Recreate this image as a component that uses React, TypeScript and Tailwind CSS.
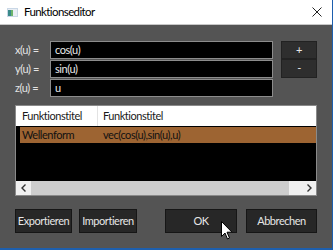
export default function App() {
  const font = { fontFamily: 'Lato, "Noto Sans", sans-serif' };
  return (
    <div className="relative w-[333px] h-[250px] overflow-hidden bg-[#1d5fae] tracking-[-0.45px]" style={font}>
      <div className="flex flex-col w-[332px] h-[248px] bg-[#545454]">
        {/* title bar */}
        <div className="flex items-center h-[25px] bg-white border-b border-[#c8c8c8] pl-[7px] pr-[10px]">
          <svg width="11" height="9" viewBox="0 0 11 9" className="mr-[6px]">
            <rect x="0" y="0" width="11" height="9" fill="#c9d7e6" />
            <rect x="1" y="1" width="9" height="7" fill="#e9eef4" />
            <rect x="1" y="2" width="3" height="6" fill="#3a8a8a" />
            <rect x="4" y="2" width="2" height="6" fill="#6bb36b" />
          </svg>
          <span className="text-[11.5px] tracking-[-0.6px] text-black leading-none">Funktionseditor</span>
          <div className="flex-1" />
          <svg width="10" height="10" viewBox="0 0 10 10">
            <path d="M0.5 0.5 L9.5 9.5 M9.5 0.5 L0.5 9.5" stroke="#222" strokeWidth="1" />
          </svg>
        </div>

        <div className="flex flex-col px-[15px] pt-[16px]">
          {/* inputs */}
          <div className="flex">
            <div className="flex flex-col gap-[1px] w-[35px] text-[11px] text-[#e4e4e4]">
              {["x(u) =", "y(u) =", "z(u) ="].map((l) => (
                <div key={l} className="h-[18px] flex items-center">{l}</div>
              ))}
            </div>
            <div className="flex flex-col gap-[1px] w-[223px]">
              {["cos(u)", "sin(u)", "u"].map((v) => (
                <div key={v} className="h-[18px] flex items-center bg-black border border-[#8c8c8c] px-[4px] text-[11px] text-[#eaeaea]">
                  {v}
                </div>
              ))}
            </div>
            <div className="flex flex-col ml-[8px] w-[36px]">
              <div className="h-[18px] flex items-center justify-center bg-[#2e2e2e] border border-[#222] text-[11px] text-[#e8e8e8]">+</div>
              <div className="h-[19px] flex items-center justify-center bg-[#2e2e2e] border border-[#222] text-[11px] text-[#e8e8e8]">-</div>
            </div>
          </div>

          {/* table */}
          <div className="mt-[8px] h-[91px] w-[302px] flex flex-col border border-[#8a8a8a] bg-black">
            <div className="flex h-[20px] bg-white text-[11px] text-[#1a1a1a]">
              <div className="w-[82px] pl-[6px] flex items-center border-r border-[#e3e3e3]">Funktionstitel</div>
              <div className="pl-[5px] flex items-center">Funktionstitel</div>
            </div>
            <div className="flex h-[16px] mt-[1px] ml-[4px] bg-[#9d6432] text-[11px] text-[#111]">
              <div className="w-[78px] pl-[2px] flex items-center">Wellenform</div>
              <div className="pl-[5px] flex items-center">vec(cos(u),sin(u),u)</div>
            </div>
            <div className="flex-1" />
            <div className="flex h-[14px] bg-[#f0f0f0]">
              <div className="w-[15px] flex items-center justify-center">
                <svg width="6" height="8" viewBox="0 0 6 8">
                  <path d="M4.5 0.5 L1 4 L4.5 7.5" stroke="#333" strokeWidth="1.4" fill="none" />
                </svg>
              </div>
              <div className="w-[258px] bg-[#cdcdcd]" />
              <div className="flex-1" />
              <div className="w-[15px] flex items-center justify-center">
                <svg width="6" height="8" viewBox="0 0 6 8">
                  <path d="M1.5 0.5 L5 4 L1.5 7.5" stroke="#333" strokeWidth="1.4" fill="none" />
                </svg>
              </div>
            </div>
          </div>

          {/* buttons */}
          <div className="flex mt-[13px] text-[11px] text-[#e6e6e6]">
            <div className="w-[57px] h-[24px] flex items-center justify-center bg-[#272727] border border-[#161616]">Exportieren</div>
            <div className="w-[58px] h-[24px] ml-[7px] flex items-center justify-center bg-[#272727] border border-[#161616]">Importieren</div>
            <div className="flex-1" />
            <div className="w-[72px] h-[24px] flex items-center justify-center bg-[#272727] border border-[#161616]">OK</div>
            <div className="w-[71px] h-[24px] ml-[9px] flex items-center justify-center bg-[#272727] border border-[#161616]">Abbrechen</div>
          </div>
        </div>
      </div>

      {/* mouse cursor */}
      <svg className="absolute left-[221px] top-[221px]" width="12" height="19" viewBox="0 0 12 19">
        <path d="M0.5 0.5 L0.5 15.5 L4 12 L6.5 18 L8.5 17 L6 11.2 L11 11.2 Z" fill="#fff" stroke="#000" strokeWidth="1" />
      </svg>
    </div>
  );
}
